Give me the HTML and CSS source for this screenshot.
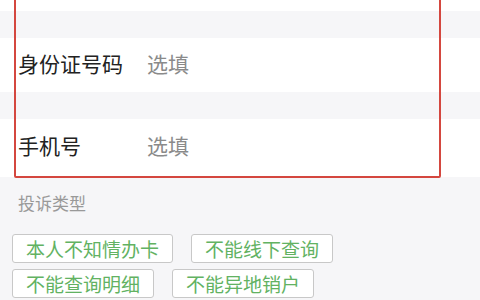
FILE: index.html
```html
<!DOCTYPE html>
<html lang="zh-CN">
<head>
	<meta charset="UTF-8">
	<title>投诉</title>
	<link rel="stylesheet" href="styles.css">
</head>
<body>
	<div class="page">
		<!-- 表单 -->
		<div class="form">
			<div class="cell top"></div>
			<div class="gap"></div>
			<div class="cell">
				<span class="label">身份证号码</span>
				<span class="value">选填</span>
			</div>
			<div class="gap"></div>
			<div class="cell last">
				<span class="label">手机号</span>
				<span class="value">选填</span>
			</div>
			<!-- 红框标注 -->
			<div class="mark"></div>
		</div>
		<!-- 投诉类型 -->
		<div class="types">
			<h5>投诉类型</h5>
			<div class="tags">
				<span class="tag">本人不知情办卡</span>
				<span class="tag">不能线下查询</span>
				<span class="tag">不能查询明细</span>
				<span class="tag">不能异地销户</span>
			</div>
		</div>
	</div>
</body>
</html>
```

FILE: styles.css
```css
body {
	margin: 0;
	padding: 0;
	background-color: #F6F6F8;
	font-family: "Noto Sans CJK SC", "Noto Sans", sans-serif;
}

.page {
	width: 480px;
	height: 300px;
	overflow: hidden;
}

.form {
	position: relative;
}

.cell {
	display: flex;
	align-items: center;
	height: 54px;
	padding-left: 18px;
	padding-bottom: 0;
	box-sizing: border-box;
	background-color: #FFF;
}

.cell.top {
	height: 11px;
}

.cell .label,
.cell .value {
	margin-bottom: 5px;
}

.cell.last {
	height: 58px;
	padding-bottom: 2px;
}

.gap {
	height: 27px;
}

.label {
	width: 129px;
	font-size: 21px;
	color: #222;
}

.value {
	font-size: 21px;
	color: #8A8A8A;
}

.mark {
	position: absolute;
	left: 14px;
	top: -4px;
	width: 423px;
	bottom: -1px;
	border: 2px solid #D4473F;
	border-radius: 2px;
}

.types {
	padding: 14px 12px 0;
}

.types h5 {
	margin: 0 0 0 6px;
	font-size: 17px;
	font-weight: normal;
	line-height: 24px;
	color: #999;
}

.tags {
	display: flex;
	flex-wrap: wrap;
	width: 340px;
	column-gap: 18px;
	row-gap: 6px;
	margin-top: 19px;
}

.tag {
	height: 27px;
	padding: 0 13px;
	line-height: 27px;
	font-size: 19px;
	color: #62B262;
	background-color: #FFF;
	border: 1px solid #C8C8C8;
	border-radius: 3px;
}
```
